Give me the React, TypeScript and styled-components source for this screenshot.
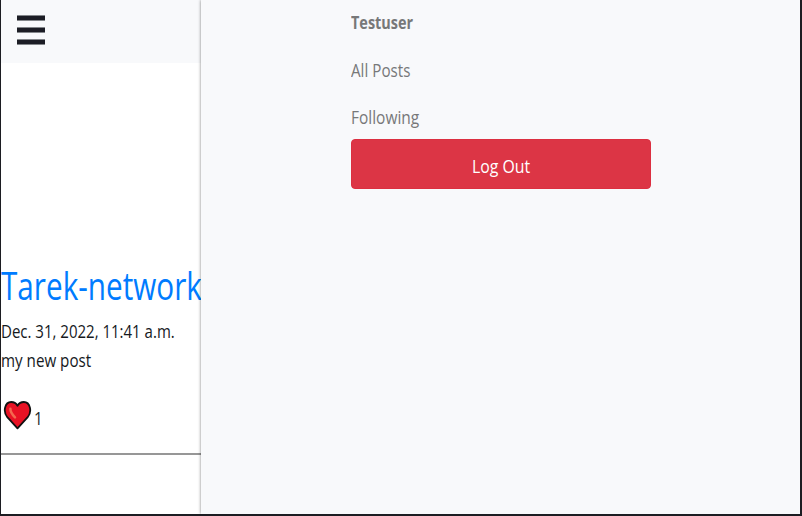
import React from "react";
import styled, { createGlobalStyle } from "styled-components";

const GlobalStyle = createGlobalStyle`
  *, *::before, *::after { box-sizing: border-box; }
  body {
    margin: 0;
    overflow: hidden;
    font-family: "Open Sans", "Noto Sans", sans-serif;
    color: #212529;
  }
`;

const Frame = styled.div`
  display: grid;
  grid-template-columns: 200px 1fr;
  width: 802px;
  height: 516px;
  border: solid #1c1d22;
  border-width: 0 2px 2px 1px;
  background: #fff;
  overflow: hidden;
`;

const Feed = styled.main`
  display: flex;
  flex-direction: column;
  min-width: 0;
`;

const TopBar = styled.header`
  height: 63px;
  flex: none;
  padding: 15px 0 0 16px;
  background: #f8f9fb;
`;

const MenuButton = styled.button`
  display: flex;
  flex-direction: column;
  gap: 6px;
  width: 28px;
  padding: 0;
  border: 0;
  background: none;
`;

const MenuLine = styled.span`
  height: 6px;
  border: solid #83868a;
  border-width: 1px 0;
  background: #1c1d25;
`;

const Post = styled.article`
  display: flex;
  flex-direction: column;
  height: 392px;
  padding-top: 199px;
  border-bottom: 2px solid #979797;
`;

/* Condensed lettering: glyphs are narrowed from their left or centre edge. */
const Label = styled.span<{ $squeeze: number; $center?: boolean }>`
  display: inline-block;
  white-space: nowrap;
  transform: scaleX(${(p) => p.$squeeze});
  transform-origin: ${(p) => (p.$center ? "center" : "left")};
`;

const Author = styled.h2`
  margin: 0;
  height: 54px;
  font-size: 37.5px;
  font-weight: 400;
  line-height: 47px;
  color: #007bff;
`;

const Line = styled.div`
  height: 29px;
  font-size: 18px;
  line-height: 31px;
  color: #16191d;
`;

const Likes = styled.div`
  display: flex;
  gap: 2px;
  margin-top: 26px;
  padding-left: 2px;
  font-size: 18px;
  line-height: 37px;
`;

const Drawer = styled.aside`
  position: relative;
  z-index: 1;
  padding: 0 149px 0 150px;
  background: #f8f9fb;
  box-shadow: 0 0 3px rgba(0, 0, 0, 0.5);
`;

const Nav = styled.nav`
  display: flex;
  flex-direction: column;
`;

const NavItem = styled.a<{ $strong?: boolean }>`
  height: 47.5px;
  font-size: 18px;
  line-height: 45px;
  font-weight: ${(p) => (p.$strong ? 700 : 400)};
  color: #777879;
`;

const LogOut = styled.button`
  display: block;
  width: 300px;
  height: 50px;
  margin-top: -3.5px;
  padding: 4px 0 0;
  border: 1px solid #dc2f40;
  border-radius: 4px;
  background: #dc3545;
  color: #fff;
  font: 400 18px "Open Sans", "Noto Sans", sans-serif;
`;

const Heart = () => (
  <svg width="29" height="31" viewBox="0 0 29 31" aria-hidden="true">
    <path
      d="M14.5 28.3 L4.3 17.2 C-.3 11.5 1.8 2 8.2 2 C11.2 2 13.2 3.5 14.5 5.7 C15.8 3.5 17.8 2 20.8 2 C27.2 2 29.3 11.5 24.7 17.2 Z"
      fill="#e81224"
      stroke="#111"
      strokeWidth="1.8"
      strokeLinejoin="round"
    />
    <path d="M7.4 8.8 C7.2 12.5 9.2 14.5 12 17.3" fill="none" stroke="#f4694f" strokeWidth="2.5" strokeLinecap="round" />
  </svg>
);

export default function App() {
  return (
    <>
      <GlobalStyle />
      <Frame>
        <Feed>
          <TopBar>
            <MenuButton aria-label="Menu">
              <MenuLine />
              <MenuLine />
              <MenuLine />
            </MenuButton>
          </TopBar>
          <Post>
            <Author><Label $squeeze={0.792}>Tarek-network</Label></Author>
            <Line><Label $squeeze={0.834}>Dec. 31, 2022, 11:41 a.m.</Label></Line>
            <Line><Label $squeeze={0.843}>my new post</Label></Line>
            <Likes>
              <Heart />
              <Label $squeeze={0.85}>1</Label>
            </Likes>
          </Post>
        </Feed>
        <Drawer>
          <Nav>
            <NavItem $strong><Label $squeeze={0.802}>Testuser</Label></NavItem>
            <NavItem><Label $squeeze={0.845}>All Posts</Label></NavItem>
            <NavItem><Label $squeeze={0.86}>Following</Label></NavItem>
          </Nav>
          <LogOut><Label $squeeze={0.88} $center>Log Out</Label></LogOut>
        </Drawer>
      </Frame>
    </>
  );
}
